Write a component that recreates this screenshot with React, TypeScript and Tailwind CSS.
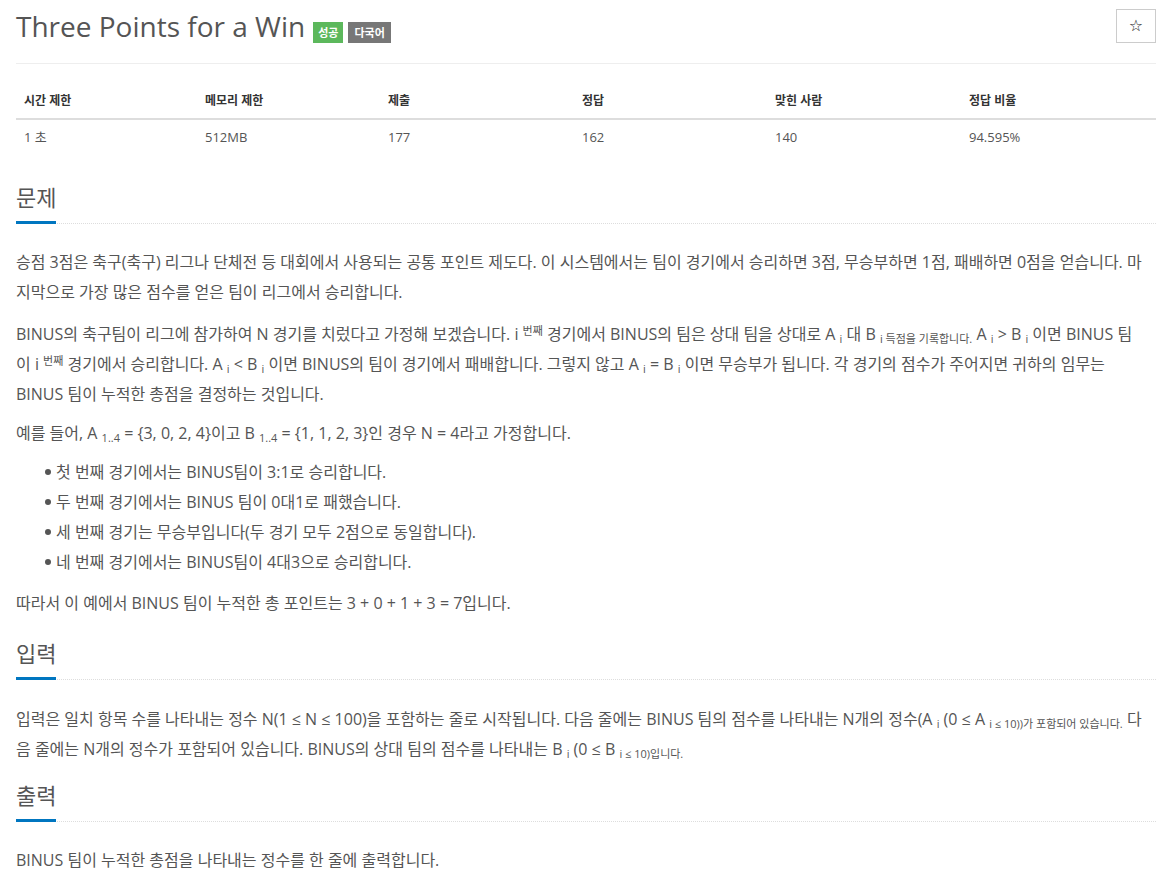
import React from "react";

// Problem page: title bar, stats table, and three sections
const SectionHeader = ({ title }: { title: string }) => (
  <div className="border-b border-dotted border-[#ddd]">
    <h2 className="inline-block pt-[10px] pb-[9px] text-[22px] leading-[30px] text-[#555] border-b-[3px] border-[#0076c0] mb-[-1px]">
      {title}
    </h2>
  </div>
);

const Sub = ({ children }: { children: React.ReactNode }) => (
  <sub className="text-[11px]">{children}</sub>
);

const Sup = ({ children }: { children: React.ReactNode }) => (
  <sup className="text-[11px]">{children}</sup>
);

const App = () => {
  const stats = [
    { label: "시간 제한", value: "1 초", w: "w-[181px]" },
    { label: "메모리 제한", value: "512MB", w: "w-[183px]" },
    { label: "제출", value: "177", w: "w-[194px]" },
    { label: "정답", value: "162", w: "w-[193px]" },
    { label: "맞힌 사람", value: "140", w: "w-[194px]" },
    { label: "정답 비율", value: "94.595%", w: "w-[195px]" },
  ];

  const items = [
    "첫 번째 경기에서는 BINUS팀이 3:1로 승리합니다.",
    "두 번째 경기에서는 BINUS 팀이 0대1로 패했습니다.",
    "세 번째 경기는 무승부입니다(두 경기 모두 2점으로 동일합니다).",
    "네 번째 경기에서는 BINUS팀이 4대3으로 승리합니다.",
  ];

  return (
    <div className="h-[874px] overflow-hidden bg-white pl-4 pr-[6px] font-['Open_Sans','Noto_Sans_CJK_KR',sans-serif] text-[#555]">
      {/* Title */}
      <div className="flex justify-between items-start pt-[9px] pb-[20px] border-b border-[#eee]">
        <div className="flex items-center">
          <h1 className="text-[28px] leading-[34px] text-[#555]">Three Points for a Win</h1>
          <span className="ml-[8px] mt-[12px] h-[21px] px-[5px] leading-[21px] text-[11px] font-bold text-white bg-[#5cb85c]">
            성공
          </span>
          <span className="ml-[5px] mt-[12px] h-[21px] px-[6px] leading-[21px] text-[11px] font-bold text-white bg-[#777]">
            다국어
          </span>
        </div>
        <button className="w-[40px] h-[34px] border border-[#ccc] bg-white flex items-center justify-center text-[16px] text-[#222] font-['DejaVu_Sans',sans-serif]">
          ☆
        </button>
      </div>

      {/* Stats table */}
      <table className="w-full table-fixed mt-[20px] border-collapse">
        <thead>
          <tr className="border-b-2 border-[#ddd]">
            {stats.map((s) => (
              <th
                key={s.label}
                className={`${s.w} px-[8px] py-[8px] text-left text-[12px] leading-[18px] font-bold text-[#333]`}
              >
                {s.label}
              </th>
            ))}
          </tr>
        </thead>
        <tbody>
          <tr>
            {stats.map((s) => (
              <td key={s.label} className="px-[8px] py-[7px] text-[13px] leading-[20px] text-[#555]">
                {s.value}
              </td>
            ))}
          </tr>
        </tbody>
      </table>

      {/* 문제 */}
      <div className="mt-[18px]">
        <SectionHeader title="문제" />
        <div className="mt-[23px] text-[16px] leading-[30px]">
          <p className="mb-[12px] whitespace-nowrap">
            승점 3점은 축구(축구) 리그나 단체전 등 대회에서 사용되는 공통 포인트 제도다. 이 시스템에서는 팀이 경기에서 승리하면 3점, 무승부하면 1점, 패배하면 0점을 얻습니다. 마
            <br />
            지막으로 가장 많은 점수를 얻은 팀이 리그에서 승리합니다.
          </p>
          <p className="mb-[9px] whitespace-nowrap">
            BINUS의 축구팀이 리그에 참가하여 N 경기를 치렀다고 가정해 보겠습니다. i <Sup>번째</Sup> 경기에서 BINUS의 팀은 상대 팀을 상대로 A <Sub>i</Sub> 대 B <Sub>i 득점을 기록합니다.</Sub> A <Sub>i</Sub> &gt; B <Sub>i</Sub> 이면 BINUS 팀
            <br />
            이 i <Sup>번째</Sup> 경기에서 승리합니다. A <Sub>i</Sub> &lt; B <Sub>i</Sub> 이면 BINUS의 팀이 경기에서 패배합니다. 그렇지 않고 A <Sub>i</Sub> = B <Sub>i</Sub> 이면 무승부가 됩니다. 각 경기의 점수가 주어지면 귀하의 임무는
            <br />
            BINUS 팀이 누적한 총점을 결정하는 것입니다.
          </p>
          <p className="mb-[9px] whitespace-nowrap">
            예를 들어, A <Sub>1..4</Sub> = {"{3, 0, 2, 4}"}이고 B <Sub>1..4</Sub> = {"{1, 1, 2, 3}"}인 경우 N = 4라고 가정합니다.
          </p>
          <ul className="mb-[11px] pl-[29px]">
            {items.map((t) => (
              <li key={t} className="flex items-center whitespace-nowrap">
                <span className="w-[6px] h-[6px] rounded-full bg-[#555] mr-[5px]" />
                {t}
              </li>
            ))}
          </ul>
          <p className="mb-[10px] whitespace-nowrap">
            따라서 이 예에서 BINUS 팀이 누적한 총 포인트는 3 + 0 + 1 + 3 = 7입니다.
          </p>
        </div>
      </div>

      {/* 입력 */}
      <div className="mt-[5px]">
        <SectionHeader title="입력" />
        <div className="mt-[24px] text-[16px] leading-[30px]">
          <p className="mb-[6px] whitespace-nowrap">
            입력은 일치 항목 수를 나타내는 정수 N(1 ≤ N ≤ 100)을 포함하는 줄로 시작됩니다. 다음 줄에는 BINUS 팀의 점수를 나타내는 N개의 정수(A <Sub>i</Sub> (0 ≤ A <Sub>i ≤ 10))가 포함되어 있습니다.</Sub> 다
            <br />
            음 줄에는 N개의 정수가 포함되어 있습니다. BINUS의 상대 팀의 점수를 나타내는 B <Sub>i</Sub> (0 ≤ B <Sub>i ≤ 10)입니다.</Sub>
          </p>
        </div>
      </div>

      {/* 출력 */}
      <div>
        <SectionHeader title="출력" />
        <div className="mt-[25px] text-[16px] leading-[26px]">
          <p className="whitespace-nowrap">BINUS 팀이 누적한 총점을 나타내는 정수를 한 줄에 출력합니다.</p>
        </div>
      </div>
    </div>
  );
};

export default App;
